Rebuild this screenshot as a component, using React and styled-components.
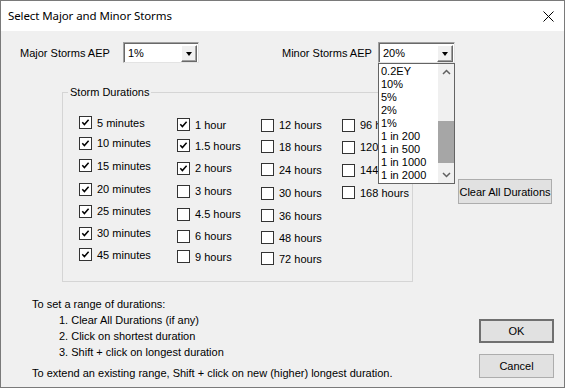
import React from "react";
import styled, { createGlobalStyle } from "styled-components";

const Global = createGlobalStyle`
  html, body { margin: 0; padding: 0; background: #f0f0f0; }
  * { box-sizing: border-box; }
`;

const Window = styled.div`
  width: 565px;
  height: 388px;
  border: 1px solid #7a7a7a;
  background: #f0f0f0;
  display: flex;
  flex-direction: column;
  font-family: "Liberation Sans", Arial, sans-serif;
  font-size: 11px;
  color: #000;
  overflow: hidden;
`;

const TitleBar = styled.div`
  height: 30px;
  flex: none;
  background: #fff;
  display: flex;
  align-items: center;
  justify-content: space-between;
  padding: 0 10px 0 7px;
`;

const Title = styled.span`
  font-family: "Noto Sans", "Liberation Sans", sans-serif;
  font-size: 11.5px;
  letter-spacing: -0.1px;
  color: #000;
  margin-top: -1px;
`;

const Body = styled.div`
  flex: 1;
  display: flex;
  flex-direction: column;
  padding: 11px 0 0 19px;
`;

const TopRow = styled.div`
  display: flex;
  align-items: center;
  height: 21px;
`;

const FieldLabel = styled.span`
  width: ${(p) => p.$w}px;
  flex: none;
`;

const Combo = styled.div`
  position: relative;
  width: ${(p) => p.$w}px;
  height: 21px;
  flex: none;
  background: #fff;
  border: 1px solid;
  border-color: #a0a0a0 #e3e3e3 #e3e3e3 #a0a0a0;
  box-shadow: inset 1px 1px 0 #696969;
  display: flex;
  align-items: center;
  padding-left: 4px;
  margin-right: ${(p) => p.$mr || 0}px;
`;

const ComboText = styled.span`
  flex: 1;
  padding-top: 1px;
`;

const ComboButton = styled.div`
  width: 16px;
  height: 17px;
  margin-right: 1px;
  margin-top: 1px;
  background: #f0f0f0;
  border: 1px solid;
  border-color: #fff #696969 #696969 #fff;
  box-shadow: inset -1px -1px 0 #a0a0a0;
  display: flex;
  align-items: center;
  justify-content: center;
`;

const Arrow = styled.span`
  width: 0;
  height: 0;
  border-left: 3.5px solid transparent;
  border-right: 3.5px solid transparent;
  border-top: 4px solid #000;
  margin-top: 1px;
`;

const DropList = styled.div`
  position: absolute;
  left: -1px;
  top: 20px;
  width: 77px;
  height: 121px;
  background: #fff;
  border: 1px solid #646464;
  display: flex;
  z-index: 5;
`;

const Items = styled.div`
  flex: 1;
  display: flex;
  flex-direction: column;
  padding: 1px 0 0 2px;
`;

const Item = styled.div`
  height: 13px;
  line-height: 13px;
  font-size: 11px;
  white-space: nowrap;
`;

const ScrollBar = styled.div`
  width: 16px;
  background: #f0f0f0;
  display: flex;
  flex-direction: column;
  align-items: stretch;
`;

const ScrollArrow = styled.div`
  height: 16px;
  display: flex;
  align-items: center;
  justify-content: center;
`;

const Track = styled.div`
  flex: 1;
  display: flex;
  flex-direction: column;
  padding-top: ${(p) => p.$top}px;
`;

const Thumb = styled.div`
  height: ${(p) => p.$h}px;
  background: #a6a6a6;
`;

const MiddleRow = styled.div`
  display: flex;
  margin-top: 29px;
`;

const GroupBox = styled.div`
  position: relative;
  margin-left: 42px;
  width: 351px;
  height: 190px;
  border: 1px solid #d5d5d5;
  display: grid;
  grid-template-columns: 98px 84px 81px 60px;
  padding-left: 16px;
`;

const GroupCaption = styled.span`
  position: absolute;
  left: 5px;
  top: -8px;
  padding: 0 2px;
  background: #f0f0f0;
  line-height: 14px;
`;

const Column = styled.div`
  display: flex;
  flex-direction: column;
  padding-top: ${(p) => p.$top}px;
`;

const Row = styled.label`
  height: ${(p) => p.$h}px;
  display: flex;
  align-items: center;
  gap: 5px;
  white-space: nowrap;
`;

const Box = styled.span`
  width: 13px;
  height: 13px;
  flex: none;
  background: #fff;
  border: 1px solid #333;
  display: flex;
  align-items: center;
  justify-content: center;
`;

const SideColumn = styled.div`
  display: flex;
  flex-direction: column;
  margin-left: 45px;
  padding-top: 87px;
`;

const Button = styled.div`
  width: ${(p) => p.$w}px;
  height: ${(p) => p.$h}px;
  background: #e1e1e1;
  border: ${(p) => (p.$default ? "2px solid #707070" : "1px solid #adadad")};
  display: flex;
  align-items: center;
  justify-content: center;
  white-space: nowrap;
`;

const BottomRow = styled.div`
  display: flex;
  justify-content: space-between;
  margin-top: 14px;
  padding-right: 10px;
`;

const Instructions = styled.div`
  margin-left: 12px;
  display: flex;
  flex-direction: column;
`;

const Line = styled.div`
  line-height: 16px;
  padding-left: ${(p) => (p.$indent ? 27 : 0)}px;
  margin-top: ${(p) => p.$mt || 0}px;
  white-space: nowrap;
`;

const Buttons = styled.div`
  display: flex;
  flex-direction: column;
  gap: 11px;
  padding-top: 23px;
`;

const Check = () => (
  <svg width="9" height="9" viewBox="0 0 9 9">
    <polyline points="1.3,4.3 3.4,6.6 7.6,1.8" fill="none" stroke="#000" strokeWidth="1.5" />
  </svg>
);

const Chevron = ({ up }) => (
  <svg width="9" height="6" viewBox="0 0 9 6">
    <polyline
      points={up ? "1,5 4.5,1.5 8,5" : "1,1 4.5,4.5 8,1"}
      fill="none"
      stroke="#606060"
      strokeWidth="1.5"
    />
  </svg>
);

const columns = [
  {
    top: 19,
    rows: [
      ["5 minutes", true, 21],
      ["10 minutes", true, 20],
      ["15 minutes", true, 25],
      ["20 minutes", true, 22],
      ["25 minutes", true, 22],
      ["30 minutes", true, 22],
      ["45 minutes", true, 21],
    ],
  },
  {
    top: 21,
    rows: [
      ["1 hour", true, 21],
      ["1.5 hours", true, 21],
      ["2 hours", true, 24],
      ["3 hours", false, 22],
      ["4.5 hours", false, 24],
      ["6 hours", false, 20],
      ["9 hours", false, 21],
    ],
  },
  {
    top: 21,
    rows: [
      ["12 hours", false, 22],
      ["18 hours", false, 21],
      ["24 hours", false, 25],
      ["30 hours", false, 22],
      ["36 hours", false, 23],
      ["48 hours", false, 21],
      ["72 hours", false, 21],
    ],
  },
  {
    top: 21,
    rows: [
      ["96 hours", false, 22],
      ["120 hours", false, 22],
      ["144 hours", false, 24],
      ["168 hours", false, 21],
    ],
  },
];

const listItems = ["0.2EY", "10%", "5%", "2%", "1%", "1 in 200", "1 in 500", "1 in 1000", "1 in 2000"];

export default function App() {
  return (
    <>
      <Global />
      <Window>
        <TitleBar>
          <Title>Select Major and Minor Storms</Title>
          <svg width="11" height="11" viewBox="0 0 11 11">
            <path d="M0.5 0.5 L10.5 10.5 M10.5 0.5 L0.5 10.5" stroke="#000" strokeWidth="1" />
          </svg>
        </TitleBar>
        <Body>
          <TopRow>
            <FieldLabel $w={103}>Major Storms AEP</FieldLabel>
            <Combo $w={76} $mr={83}>
              <ComboText>1%</ComboText>
              <ComboButton>
                <Arrow />
              </ComboButton>
            </Combo>
            <FieldLabel $w={96}>Minor Storms AEP</FieldLabel>
            <Combo $w={77}>
              <ComboText>20%</ComboText>
              <ComboButton>
                <Arrow />
              </ComboButton>
              <DropList>
                <Items>
                  {listItems.map((t) => (
                    <Item key={t}>{t}</Item>
                  ))}
                </Items>
                <ScrollBar>
                  <ScrollArrow>
                    <Chevron up />
                  </ScrollArrow>
                  <Track $top={41}>
                    <Thumb $h={42} />
                  </Track>
                  <ScrollArrow>
                    <Chevron />
                  </ScrollArrow>
                </ScrollBar>
              </DropList>
            </Combo>
          </TopRow>
          <MiddleRow>
            <GroupBox>
              <GroupCaption>Storm Durations</GroupCaption>
              {columns.map((col, i) => (
                <Column key={i} $top={col.top}>
                  {col.rows.map(([label, checked, h]) => (
                    <Row key={label} $h={h}>
                      <Box>{checked && <Check />}</Box>
                      <span>{label}</span>
                    </Row>
                  ))}
                </Column>
              ))}
            </GroupBox>
            <SideColumn>
              <Button $w={94} $h={25}>Clear All Durations</Button>
            </SideColumn>
          </MiddleRow>
          <BottomRow>
            <Instructions>
              <Line>To set a range of durations:</Line>
              <Line $indent>1. Clear All Durations (if any)</Line>
              <Line $indent>2. Click on shortest duration</Line>
              <Line $indent>3. Shift + click on longest duration</Line>
              <Line $mt={5}>To extend an existing range, Shift + click on new (higher) longest duration.</Line>
            </Instructions>
            <Buttons>
              <Button $w={75} $h={24} $default>OK</Button>
              <Button $w={75} $h={24}>Cancel</Button>
            </Buttons>
          </BottomRow>
        </Body>
      </Window>
    </>
  );
}
